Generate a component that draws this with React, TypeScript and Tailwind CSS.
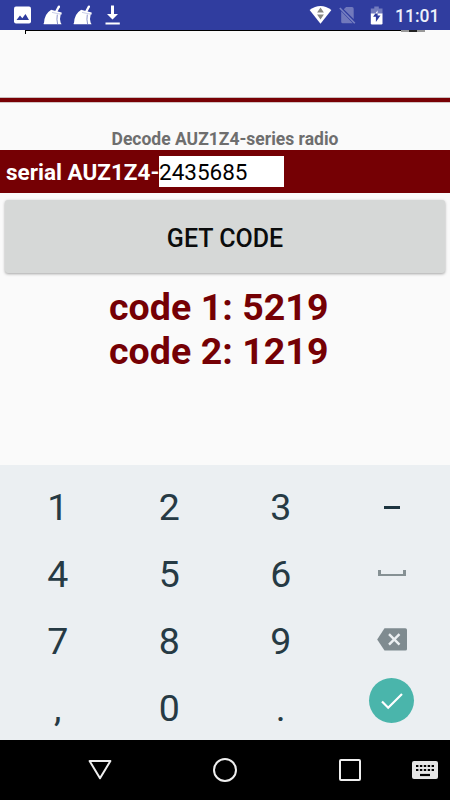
import React from 'react';

function Broom() {
  return (
    <svg width="20" height="20" viewBox="0 0 20 20" className="block">
      <path d="M15.9 1.6 13 7" stroke="#fff" strokeWidth="2.3" strokeLinecap="round" />
      <path d="M8 4.7 18.6 7.6V9.4H6.4Z" fill="#fff" />
      <path d="M7.6 5.2 17.8 8.4Q16.4 14 17.6 17.6L18.6 19.2H.8Q0 18.6 1 17.9 1.6 8.6 7.6 5.2Z" fill="#fff" />
      <path d="M14.3 9.6Q13.4 14.5 14.6 19" stroke="#6c76bc" strokeWidth=".8" fill="none" />
      <path d="M9 7.4 17.6 9.2" stroke="#a4abd8" strokeWidth=".6" fill="none" />
    </svg>
  );
}

function StatusBar() {
  return (
    <header className="flex h-[30px] items-center justify-between bg-[#303d9f] pl-[13px] pr-[9px]">
      <div className="flex items-center">
        <svg width="19" height="18" viewBox="0 0 19 18" className="block">
          <rect x="1" y=".5" width="17" height="17" rx="2" fill="#fff" />
          <path d="M3.5 14 7 9.5 9.3 12.2 12.5 8 16 14Z" fill="#303d9f" />
        </svg>
        <div className="ml-[11px]"><Broom /></div>
        <div className="ml-[10px]"><Broom /></div>
        <svg width="16" height="20" viewBox="0 0 16 20" className="ml-[12px] block">
          <path d="M6 .5h3V9h4L7.5 14.5 2 9h4Z M.5 17.4h14.3v2H.5Z" fill="#fff" />
        </svg>
      </div>
      <div className="flex items-center">
        <svg width="23" height="20" viewBox="0 0 23 20" className="block">
          <path d="M.6 5.1Q11.5-3.2 22.4 5.1L11.5 18.7Z" fill="#fff" />
          <path d="M11.5 2.4 14.9 7.4H8.1Z M11.5 14.6 14.9 9.6H8.1Z" fill="#878782" />
        </svg>
        <svg width="18" height="20" viewBox="0 0 18 20" className="ml-[7px] block">
          <path d="M7.1 2H13q1.7 0 1.7 1.7V14L4.8 4.3Z M2.2 6.2V16.7q0 1.6 1.6 1.6h10Z" fill="#7179bc" />
          <path d="M.8 3 15.8 18.3" stroke="#7982c3" strokeWidth="1.6" />
        </svg>
        <svg width="14" height="19" viewBox="0 0 14 19" className="ml-[13px] block">
          <path d="M4.3 .5h4.5v2H12.5V8H.8V2.5h3.5Z" fill="#737cbe" />
          <path d="M.8 7.5h11.7v9.8q0 1.2-1.2 1.2H2q-1.2 0-1.2-1.2Z" fill="#fff" />
          <path d="M7.6 4.3 3.1 10.7h2.8V16L10.5 9.6H7.6Z" fill="#303d9f" />
          <path d="M7.6 4.3V7.5H5.3Z" fill="#fff" />
        </svg>
        <span className="ml-[11px] w-[46px] whitespace-nowrap pt-[2px] text-[17.5px] font-medium leading-[28px] text-[#edf0fa]">11:01</span>
      </div>
    </header>
  );
}

function Key({ label }: { label: string }) {
  return <div className="flex items-center justify-center pb-[2px] text-[37.5px] leading-[44px] text-[#263a44]">{label}</div>;
}

function Keyboard() {
  return (
    <section className="grid h-[275px] grid-cols-4 grid-rows-[67px_67px_67px_67px] bg-[#ebeff2] px-[2px] pt-[9px]">
      <Key label="1" />
      <Key label="2" />
      <Key label="3" />
      <div className="flex items-center justify-center pb-[1px]">
        <div className="h-[3px] w-4 bg-[#1d3440]" />
      </div>
      <Key label="4" />
      <Key label="5" />
      <Key label="6" />
      <div className="flex items-center justify-center pb-[4px]">
        <div className="h-[6px] w-7 border-x-[3px] border-b-2 border-[#869194]" />
      </div>
      <Key label="7" />
      <Key label="8" />
      <Key label="9" />
      <div className="flex items-center justify-center pb-[4px]">
        <svg width="30" height="23" viewBox="0 0 30 23" className="block">
          <path d="M7.5 .3H28.4Q30 .3 30 1.9V21Q30 22.6 28.4 22.6H7.5L.2 11.4Z" fill="#7f8b90" />
          <path d="m12 6.2 10.5 10.5m0-10.5L12 16.7" stroke="#ebeff2" strokeWidth="2.4" />
        </svg>
      </div>
      <Key label="," />
      <Key label="0" />
      <Key label="." />
      <div className="flex items-start justify-center pr-[1px] pt-[3px]">
        <div className="flex h-[45px] w-[45px] items-center justify-center rounded-full bg-[#4ab5ab]">
          <svg width="24" height="18" viewBox="0 0 24 18" className="block">
            <path d="m2 9.5 6.2 6.3L22 2" fill="none" stroke="#fff" strokeWidth="2.2" />
          </svg>
        </div>
      </div>
    </section>
  );
}

function NavBar() {
  return (
    <nav className="flex h-[60px] items-center bg-black pl-[88px]">
      <svg width="24" height="22" viewBox="0 0 24 22" className="block">
        <path d="M1.6 2H22.4L12 19.3Z" fill="none" stroke="#efefef" strokeWidth="2" strokeLinejoin="round" />
      </svg>
      <div className="ml-[101px] h-6 w-6 rounded-full border-2 border-[#efefef]" />
      <div className="ml-[102px] h-[22px] w-[22px] rounded-[2px] border-2 border-[#efefef]" />
      <svg width="26" height="18" viewBox="0 0 26 18" className="ml-[51px] block">
        <rect width="26" height="18" rx="2" fill="#e5e5e5" />
        <path d="M4 5H22M4 9H22" stroke="#000" strokeWidth="2.2" strokeDasharray="2.4 1.5" />
        <path d="M8 14h10" stroke="#000" strokeWidth="2.2" />
      </svg>
    </nav>
  );
}

export default function App() {
  return (
    <div className="flex h-[800px] w-[450px] flex-col overflow-hidden bg-[#fafafa] font-['Roboto',sans-serif]">
      <StatusBar />
      <main className="h-[435px]">
        <div className="flex h-[4px] items-start pl-[25px]">
          <div className="h-[4px] w-px bg-black" />
          <div className="h-px w-[375px] bg-black" />
          <div className="flex h-[2px] w-6 justify-center bg-[#989898]">
            <div className="h-[2px] w-2 bg-[#222]" />
          </div>
        </div>
        <div className="mt-[63px] h-[6px] border-t border-b border-x-0 border-t-[#c8bebe] border-b-[#d2c3c3] bg-[#780004]" />
        <h1 className="mt-[25px] h-[22px] whitespace-nowrap text-center text-[17.5px] font-bold leading-[22px] text-[#6e6e6e]">
          Decode AUZ1Z4-series radio
        </h1>
        <div className="flex h-[43px] items-center bg-[#750004] pl-[6px]">
          <label className="w-[153px] whitespace-nowrap text-[22.5px] font-bold leading-[30px] text-white">serial AUZ1Z4-</label>
          <div className="h-[31px] w-[125px] whitespace-nowrap bg-white text-[22.5px] leading-[33px] text-black">2435685</div>
        </div>
        <button className="mx-[5px] mt-[7px] block h-[73px] w-[440px] rounded-[3px] bg-[#d6d8d7] pt-[2px] text-[25px] font-medium leading-[73px] text-[#0b0c0c] shadow-[0_1px_3px_rgba(0,0,0,0.35)]">
          GET CODE
        </button>
        <div className="ml-[109px] mt-[12px] whitespace-nowrap text-[37.5px] font-bold leading-[44px] tracking-[0.05px] text-[#750004]">
          <p>code 1: 5219</p>
          <p>code 2: 1219</p>
        </div>
      </main>
      <Keyboard />
      <NavBar />
    </div>
  );
}
